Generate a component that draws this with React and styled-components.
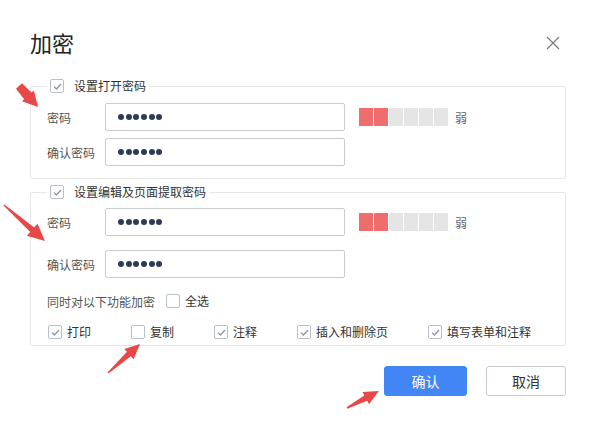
import styled, { createGlobalStyle } from 'styled-components'

const GlobalStyle = createGlobalStyle`
  html, body {
    margin: 0;
    padding: 0;
    background: #ffffff;
  }
  body {
    font-family: "Noto Sans CJK SC", "Noto Sans", sans-serif;
    color: #333;
  }
`

function arrowPoints([x1, y1], [x2, y2], head, hw, sw0, sw1) {
  const dx = x2 - x1
  const dy = y2 - y1
  const len = Math.hypot(dx, dy)
  const ux = dx / len
  const uy = dy / len
  const nx = -uy
  const ny = ux
  const bx = x2 - ux * head
  const by = y2 - uy * head
  const p = [
    [x1 + nx * sw0, y1 + ny * sw0],
    [bx + nx * sw1, by + ny * sw1],
    [bx + nx * hw, by + ny * hw],
    [x2, y2],
    [bx - nx * hw, by - ny * hw],
    [bx - nx * sw1, by - ny * sw1],
    [x1 - nx * sw0, y1 - ny * sw0],
  ]
  return p.map(([x, y]) => `${x.toFixed(1)},${y.toFixed(1)}`).join(' ')
}

const arrows = [
  { from: [19, 86], to: [38, 107], head: 15, hw: 8, sw0: 4, sw1: 5 },
  { from: [4, 205], to: [45, 241], head: 17, hw: 8, sw0: 0.8, sw1: 3 },
  { from: [108, 373], to: [140, 344], head: 15, hw: 7, sw0: 0.8, sw1: 3 },
  { from: [347, 408], to: [379, 391], head: 15, hw: 7, sw0: 0.8, sw1: 3 },
]

const functions = [
  { label: '打印', checked: true, w: 83 },
  { label: '复制', checked: false, w: 83 },
  { label: '注释', checked: true, w: 83 },
  { label: '插入和删除页', checked: true, w: 131 },
  { label: '填写表单和注释', checked: true, w: 130 },
]

function Check({ checked }) {
  return (
    <Box $checked={checked}>
      {checked && (
        <svg width="9" height="7" viewBox="0 0 9 7">
          <path d="M1 3.6 L3.4 6 L8 1" fill="none" stroke="#8d95a8" strokeWidth="1.3" />
        </svg>
      )}
    </Box>
  )
}

function Password() {
  return (
    <Input>
      {[0, 1, 2, 3, 4, 5].map((i) => <Dot key={i} />)}
    </Input>
  )
}

function Strength({ level }) {
  return (
    <StrengthWrap>
      <Bar>
        {[0, 1, 2, 3, 4, 5].map((i) => <Seg key={i} $on={i < level} />)}
      </Bar>
      <StrengthText>弱</StrengthText>
    </StrengthWrap>
  )
}

export default function App() {
  return (
    <>
      <GlobalStyle />
      <Dialog>
        <Header>
          <Title>加密</Title>
          <Close>
            <svg width="14" height="14" viewBox="0 0 14 14">
              <path d="M1 1 L13 13 M13 1 L1 13" stroke="#7a7a7a" strokeWidth="1.2" />
            </svg>
          </Close>
        </Header>

        <Section>
          <Legend>
            <Check checked />
            <LegendText>设置打开密码</LegendText>
          </Legend>
          <Rows $gap={7}>
            <Row>
              <Label>密码</Label>
              <Password />
              <Strength level={2} />
            </Row>
            <Row>
              <Label>确认密码</Label>
              <Password />
            </Row>
          </Rows>
        </Section>

        <Section $second>
          <Legend>
            <Check checked />
            <LegendText>设置编辑及页面提取密码</LegendText>
          </Legend>
          <Rows $gap={14}>
            <Row>
              <Label>密码</Label>
              <Password />
              <Strength level={2} />
            </Row>
            <Row>
              <Label>确认密码</Label>
              <Password />
            </Row>
            <Options>
              <OptLabel>同时对以下功能加密</OptLabel>
              <CheckItem>
                <Check checked={false} />
                <span>全选</span>
              </CheckItem>
            </Options>
            <Functions>
              {functions.map((f) => (
                <CheckItem key={f.label} $w={f.w}>
                  <Check checked={f.checked} />
                  <span>{f.label}</span>
                </CheckItem>
              ))}
            </Functions>
          </Rows>
        </Section>

        <Footer>
          <Button $primary>确认</Button>
          <Button>取消</Button>
        </Footer>

        <Overlay width="596" height="425" viewBox="0 0 596 425">
          {arrows.map((a, i) => (
            <polygon
              key={i}
              points={arrowPoints(a.from, a.to, a.head, a.hw, a.sw0, a.sw1)}
              fill="#e94848"
            />
          ))}
        </Overlay>
      </Dialog>
    </>
  )
}

const Dialog = styled.div`
  position: relative;
  width: 596px;
  height: 425px;
  box-sizing: border-box;
  padding: 28px 30px 0 30px;
  overflow: hidden;
`

const Header = styled.div`
  display: flex;
  align-items: center;
  justify-content: space-between;
  height: 28px;
  margin-bottom: 22px;
`

const Title = styled.h1`
  margin: 0;
  font-size: 22px;
  font-weight: 400;
  line-height: 28px;
  color: #222;
`

const Close = styled.div`
  display: flex;
  margin-right: 6px;
  margin-top: 2px;
`

const Section = styled.fieldset`
  margin: ${({ $second }) => ($second ? '5px 0 0 0' : '0')};
  padding: ${({ $second }) => ($second ? '8px 16px 5px' : '9px 16px 12px')};
  border: 1px solid #e6e6e6;
  border-radius: 2px;
  min-width: 0;
`

const Legend = styled.legend`
  display: flex;
  align-items: center;
  gap: 10px;
  padding: 0 4px 0 3px;
  height: 16px;
  line-height: 16px;
`

const LegendText = styled.span`
  font-size: 12px;
  color: #333;
`

const Rows = styled.div`
  display: flex;
  flex-direction: column;
  gap: ${({ $gap }) => $gap}px;
`

const Row = styled.div`
  display: flex;
  align-items: center;
`

const Label = styled.span`
  width: 58px;
  flex-shrink: 0;
  font-size: 12px;
  color: #555;
`

const Input = styled.div`
  display: flex;
  align-items: center;
  gap: 1.7px;
  box-sizing: border-box;
  width: 240px;
  height: 28px;
  padding: 0 12px;
  border: 1px solid #cccccc;
  border-radius: 2px;
  background: #fff;
`

const Dot = styled.span`
  width: 6px;
  height: 6px;
  border-radius: 50%;
  background: #2d3b55;
`

const StrengthWrap = styled.div`
  display: flex;
  align-items: center;
  gap: 7px;
  margin-left: 14px;
`

const Bar = styled.div`
  display: flex;
  gap: 1px;
`

const Seg = styled.span`
  width: 14px;
  height: 18px;
  background: ${({ $on }) => ($on ? '#f06d6d' : '#e5e5e5')};
`

const StrengthText = styled.span`
  font-size: 12px;
  color: #666;
`

const Options = styled.div`
  display: flex;
  align-items: center;
  gap: 11px;
  height: 16px;
  margin-top: 1px;
`

const OptLabel = styled.span`
  font-size: 12px;
  color: #555;
`

const Functions = styled.div`
  display: flex;
  align-items: center;
  height: 16px;
  padding-left: 1px;
  margin-top: 1px;
`

const CheckItem = styled.label`
  display: flex;
  align-items: center;
  gap: 5px;
  width: ${({ $w }) => ($w ? `${$w}px` : 'auto')};
  flex-shrink: 0;
  font-size: 12px;
  color: #333;
  line-height: 16px;
`

const Box = styled.span`
  display: inline-flex;
  align-items: center;
  justify-content: center;
  box-sizing: border-box;
  width: 14px;
  height: 14px;
  border: 1px solid #b9c0cd;
  border-radius: 2px;
  background: #fff;
  flex-shrink: 0;
`

const Footer = styled.div`
  display: flex;
  justify-content: flex-end;
  gap: 19px;
  margin-top: 20px;
`

const Button = styled.button`
  box-sizing: border-box;
  width: ${({ $primary }) => ($primary ? '83px' : '80px')};
  height: 30px;
  border-radius: 3px;
  font-family: "Noto Sans CJK SC", "Noto Sans", sans-serif;
  font-size: 14px;
  border: 1px solid ${({ $primary }) => ($primary ? '#4286f5' : '#c6cbd3')};
  background: ${({ $primary }) => ($primary ? '#4286f5' : '#ffffff')};
  color: ${({ $primary }) => ($primary ? '#ffffff' : '#333333')};
  padding: 0;
`

const Overlay = styled.svg`
  position: absolute;
  left: 0;
  top: 0;
  pointer-events: none;
`
